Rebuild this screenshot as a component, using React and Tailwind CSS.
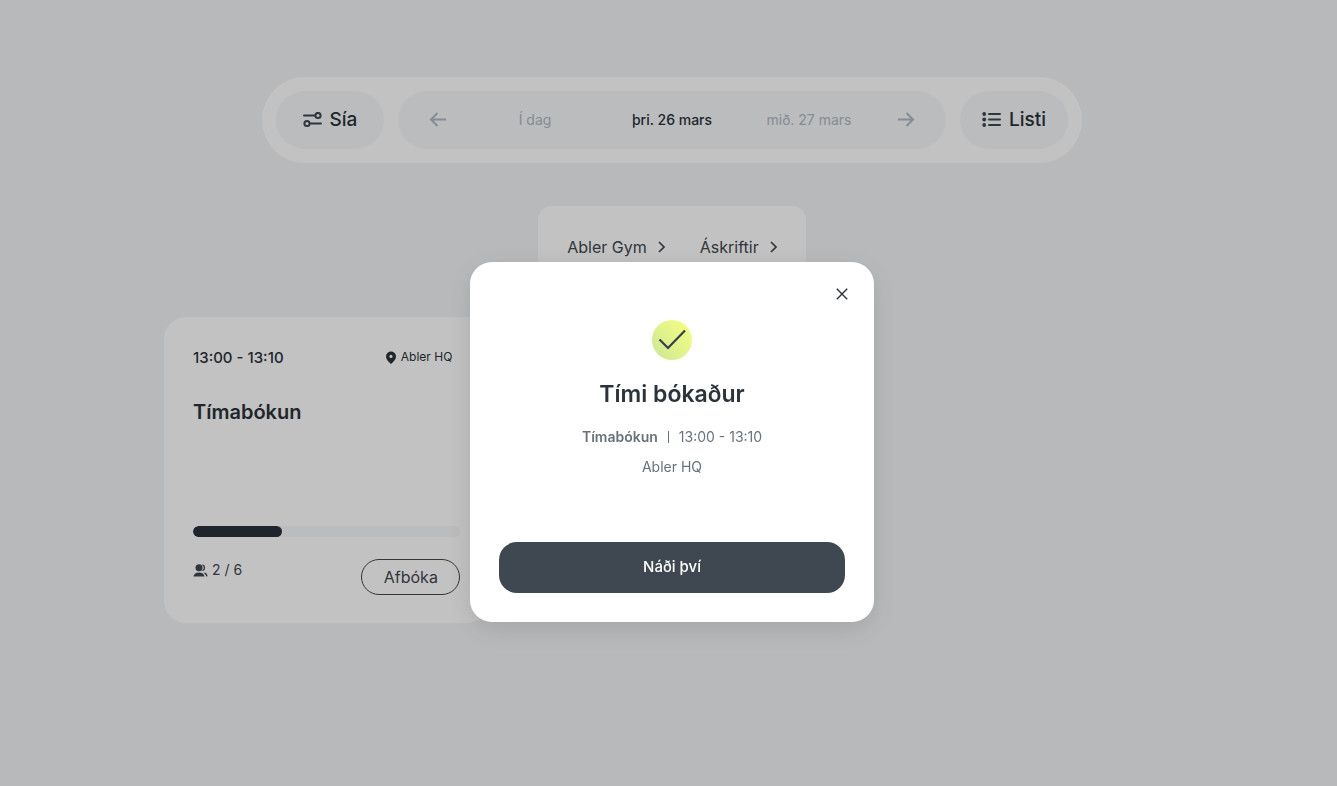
const DAYS = [
  { label: 'Í dag', active: false },
  { label: 'þri. 26 mars', active: true },
  { label: 'mið. 27 mars', active: false },
];

const LINKS = ['Abler Gym', 'Áskriftir'];

const SLOTS = [
  { time: '13:00 - 13:10', location: 'Abler HQ', title: 'Tímabókun', booked: 2, capacity: 6 },
];

export default function App() {
  return (
    <div className="min-h-screen bg-[#f2f4f6] pl-[7px] font-['Inter',sans-serif] text-[#2b333b]">
      <main className="mx-auto flex max-w-[1016px] flex-col items-center pt-[77px] pb-10">
        <Toolbar />
        <QuickLinks />
        <section className="mt-[29px] grid w-full grid-cols-1 gap-5 sm:grid-cols-2 lg:grid-cols-3">
          {SLOTS.map((slot) => (
            <SlotCard key={slot.title} slot={slot} />
          ))}
        </section>
      </main>
      <BookedDialog slot={SLOTS[0]} />
    </div>
  );
}

function Toolbar() {
  return (
    <header className="flex w-full max-w-[820px] gap-3.5 rounded-full bg-white p-3.5">
      <button type="button" className="flex h-[58px] w-[108px] items-center justify-center gap-2 rounded-full bg-[#f5f7f9] text-[19px] font-medium">
        <FilterIcon />
        Sía
      </button>
      <nav className="flex flex-1 items-center justify-between rounded-full bg-[#f5f7f9] px-[31px] text-[#b0b8c2]">
        <button type="button" aria-label="Fyrri dagur">
          <ArrowIcon d="M17 8.500H2M8.500 2L2 8.500l6.500 6.500" />
        </button>
        <div className="grid w-[411px] grid-cols-3 text-sm">
          {DAYS.map((day) => (
            <button
              key={day.label}
              type="button"
              className={day.active ? 'font-medium text-[#2b333b]' : 'text-[#b0b8c2]'}
            >
              {day.label}
            </button>
          ))}
        </div>
        <button type="button" aria-label="Næsti dagur">
          <ArrowIcon d="M1 8.500h15M9.500 2L16 8.500l-6.500 6.500" />
        </button>
      </nav>
      <button type="button" className="flex h-[58px] w-[108px] items-center justify-center gap-2 rounded-full bg-[#f5f7f9] text-[19px] font-medium">
        <ListIcon />
        Listi
      </button>
    </header>
  );
}

function QuickLinks() {
  return (
    <div className="mt-[43px] flex gap-[35px] rounded-[14px] bg-white p-[29px]">
      {LINKS.map((link) => (
        <a key={link} href="#" className="flex items-center gap-[11px] text-base leading-6 text-[#3f4850]">
          {link}
          <svg width="7" height="12" viewBox="0 0 7 12" fill="none" stroke="currentColor" strokeWidth="1.700">
            <path d="M1 1l5 5-5 5" />
          </svg>
        </a>
      ))}
    </div>
  );
}

function SlotCard({ slot }) {
  return (
    <article className="flex h-[306px] flex-col rounded-[22px] bg-white px-[29px] pt-[29px] pb-7">
      <div className="flex items-start justify-between pr-2">
        <span className="text-[15px] leading-6 font-medium">{slot.time}</span>
        <span className="flex items-center gap-1 text-xs leading-[22px]">
          <PinIcon />
          {slot.location}
        </span>
      </div>
      <h2 className="mt-7 text-xl leading-7 font-semibold">{slot.title}</h2>
      <div className="mt-auto h-[11px] overflow-hidden rounded-full bg-[#f5f7f9]">
        <div
          className="h-full rounded-full bg-[#2b303c]"
          style={{ width: `${(slot.booked / slot.capacity) * 100}%` }}
        />
      </div>
      <div className="mt-[22px] flex items-start justify-between text-[#3f4850]">
        <span className="flex items-center gap-1 text-sm leading-[22px]">
          <PeopleIcon />
          {slot.booked} / {slot.capacity}
        </span>
        <button type="button" className="h-9 w-[99px] rounded-full border border-[#3f4850] text-base">
          Afbóka
        </button>
      </div>
    </article>
  );
}

function BookedDialog({ slot }) {
  return (
    <div className="fixed inset-0 flex items-start justify-center bg-black/24 pt-[262px] pl-[7px]">
      <div
        role="dialog"
        aria-modal="true"
        aria-labelledby="booked-title"
        className="relative flex h-[360px] w-full max-w-[404px] flex-col items-center rounded-[22px] bg-white px-[29px] pt-[58px] pb-[29px] shadow-[0_7px_29px_rgba(0,0,0,0.12)]"
      >
        <button type="button" aria-label="Loka" className="absolute top-[21px] right-[21px] flex size-[22px] items-center justify-center">
          <svg width="12" height="12" viewBox="0 0 12 12" fill="none" stroke="currentColor" strokeWidth="1.400">
            <path d="M.8.8l10.400 10.400M11.200.8L.8 11.200" />
          </svg>
        </button>
        <CheckBadge />
        <h1 id="booked-title" className="mt-[18px] text-[23px] leading-8 font-semibold">
          Tími bókaður
        </h1>
        <p className="mt-[17px] flex items-center gap-2.5 text-sm leading-5 text-[#68727c]">
          <span className="font-semibold">{slot.title}</span>
          <span className="h-3 w-px bg-[#68727c]" />
          <span>{slot.time}</span>
        </p>
        <p className="mt-2.5 text-sm leading-5 text-[#68727c]">{slot.location}</p>
        <button type="button" className="mt-auto h-[51px] w-full rounded-[18px] bg-[#3f4850] text-[15px] font-medium text-white">
          Náði því
        </button>
      </div>
    </div>
  );
}

function ArrowIcon({ d }) {
  return (
    <svg width="18" height="18" viewBox="0 0 18 18" fill="none" stroke="currentColor" strokeWidth="2">
      <path d={d} />
    </svg>
  );
}

function FilterIcon() {
  return (
    <svg width="19" height="16" viewBox="0 0 19 16" fill="none" stroke="#3f4850" strokeWidth="2">
      <path d="M1 3.500h11M7 11.500h11" strokeLinecap="round" />
      <circle cx="15" cy="3.500" r="2.600" />
      <circle cx="4" cy="11.500" r="2.600" />
    </svg>
  );
}

function ListIcon() {
  return (
    <svg width="19" height="16" viewBox="0 0 19 16" fill="none" stroke="#3f4850" strokeWidth="2">
      <path d="M7 2h11M7 7.500h11M7 13h11" strokeLinecap="round" />
      <g fill="#3f4850" stroke="none">
        <circle cx="2.200" cy="2" r="1.900" />
        <circle cx="2.200" cy="7.500" r="1.900" />
        <circle cx="2.200" cy="13" r="1.900" />
      </g>
    </svg>
  );
}

function PinIcon() {
  return (
    <svg width="12" height="13" viewBox="0 0 12 13" fill="#2b333b">
      <path
        fillRule="evenodd"
        d="M6 .5a5 5 0 0 0-5 5C1 8.200 3.400 10.700 6 13c2.600-2.300 5-4.800 5-7.500a5 5 0 0 0-5-5zm0 6.500a1.600 1.600 0 1 1 0-3.200 1.600 1.600 0 0 1 0 3.200z"
      />
    </svg>
  );
}

function PeopleIcon() {
  return (
    <svg width="15" height="13" viewBox="0 0 15 13" fill="#3f4850">
      <circle cx="6" cy="3.700" r="3.500" />
      <path d="M.5 12.500c.3-2.600 2.400-4 5.500-4s5.200 1.400 5.500 4z" />
      <path d="M9.500.8c2.600.9 2.600 4.900 0 5.900M11.500 9c1.500.6 2.300 1.700 2.500 3.300" fill="none" stroke="#3f4850" strokeWidth="1.400" />
    </svg>
  );
}

function CheckBadge() {
  return (
    <svg width="40" height="40" viewBox="0 0 40 40" fill="none">
      <defs>
        <linearGradient id="lime" x1="34" y1="8" x2="6" y2="32" gradientUnits="userSpaceOnUse">
          <stop stopColor="#effc84" />
          <stop offset="1" stopColor="#d3ea93" />
        </linearGradient>
      </defs>
      <circle cx="20" cy="20" r="20" fill="url(#lime)" />
      <path d="M7.500 19.500l8.500 8.500L33 10.500" stroke="#363f48" strokeWidth="2.200" />
    </svg>
  );
}
